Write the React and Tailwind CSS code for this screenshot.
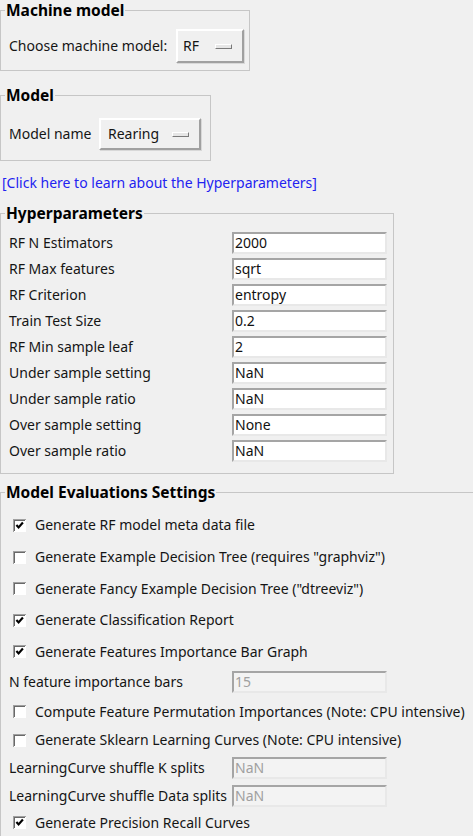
import React from 'react'

const hyper = [
  ['RF N Estimators', '2000'],
  ['RF Max features', 'sqrt'],
  ['RF Criterion', 'entropy'],
  ['Train Test Size', '0.2'],
  ['RF Min sample leaf', '2'],
  ['Under sample setting', 'NaN'],
  ['Under sample ratio', 'NaN'],
  ['Over sample setting', 'None'],
  ['Over sample ratio', 'NaN'],
]

function Entry({ value, disabled }) {
  return (
    <div className={`w-[155px] h-[22px] flex items-center pl-[1px] border-2 border-t-[#a5a5a5] border-l-[#a5a5a5] border-r-[#e8e8e8] border-b-[#e8e8e8] ${disabled ? 'bg-[#f3f3f3] text-[#a0a0a0]' : 'bg-white text-[#111]'}`}>
      {value}
    </div>
  )
}

function OptionMenu({ value, className }) {
  return (
    <div className={`flex items-center justify-between pr-[10px] bg-[#f0f0f0] border-2 border-t-white border-l-white border-r-[#a0a0a0] border-b-[#a0a0a0] shadow-[1px_1px_0_#d8d8d8] ${className}`}>
      <span>{value}</span>
      <div className="w-[17px] h-[5px] bg-[#e6e6e6] border border-t-white border-l-white border-r-[#7a7a7a] border-b-[#7a7a7a]" />
    </div>
  )
}

function Check({ checked, label }) {
  return (
    <div className="flex items-center gap-[9px] pl-[12px]">
      <svg width="13" height="13" viewBox="0 0 13 13" className="shrink-0">
        <rect x="0" y="0" width="13" height="13" fill="#a0a0a0" />
        <rect x="1" y="1" width="12" height="12" fill="#ffffff" />
        <rect x="1" y="1" width="11" height="11" fill="#696969" />
        <rect x="2" y="2" width="10" height="10" fill="#ffffff" />
        {checked && <path d="M3.4 6 L5.6 8.4 L9.9 3.6" stroke="#000" strokeWidth="2.2" fill="none" />}
      </svg>
      <span>{label}</span>
    </div>
  )
}

function Row({ h, children }) {
  return <div className={`flex items-center ${h}`}>{children}</div>
}

export default function App() {
  return (
    <div className="w-[473px] h-[836px] overflow-hidden bg-[#f0f0f0] text-[#151515] text-[14px] leading-[18px] font-['Noto_Sans',sans-serif]">
      <fieldset className="w-[250px] border border-[#c6c6c6] pt-[9px] pb-[7px]">
        <legend className="ml-[4px] px-[1px] font-bold text-[15.5px] leading-[20px] text-black">Machine model</legend>
        <div className="flex items-center h-[34px]">
          <span className="pl-[8px] w-[175px]">Choose machine model:</span>
          <OptionMenu value="RF" className="w-[68px] h-[34px] pl-[5px]" />
        </div>
      </fieldset>

      <fieldset className="mt-[15px] w-[211px] border border-[#c6c6c6] pt-[14px] pb-[10px]">
        <legend className="ml-[4px] px-[1px] font-bold text-[15.5px] leading-[18px] text-black">Model</legend>
        <div className="flex items-center h-[32px]">
          <span className="pl-[8px] w-[98px]">Model name</span>
          <OptionMenu value="Rearing" className="w-[102px] h-[32px] pl-[7px]" />
        </div>
      </fieldset>

      <div className="mt-[13px] pl-[2px] text-[#2323f0] cursor-pointer">[Click here to learn about the Hyperparameters]</div>

      <fieldset className="mt-[12px] w-[394px] border border-[#c6c6c6] pt-[8px] pb-[9px]">
        <legend className="ml-[4px] px-[1px] font-bold text-[15.5px] leading-[18px] text-black">Hyperparameters</legend>
        {hyper.map(([label, value]) => (
          <Row key={label} h="h-[26px]">
            <span className="pl-[8px] w-[231px]">{label}</span>
            <Entry value={value} />
          </Row>
        ))}
      </fieldset>

      <fieldset className="mt-[9px] w-[473px] h-[400px] border border-r-0 border-b-0 border-[#c6c6c6] pt-[8px]">
        <legend className="ml-[4px] px-[1px] font-bold text-[15.5px] leading-[18px] text-black">Model Evaluations Settings</legend>
        <Row h="h-[32px]"><Check checked label="Generate RF model meta data file" /></Row>
        <Row h="h-[32px]"><Check label={'Generate Example Decision Tree (requires "graphviz")'} /></Row>
        <Row h="h-[31px]"><Check label={'Generate Fancy Example Decision Tree ("dtreeviz")'} /></Row>
        <Row h="h-[32px]"><Check checked label="Generate Classification Report" /></Row>
        <Row h="h-[31px]"><Check checked label="Generate Features Importance Bar Graph" /></Row>
        <Row h="h-[30px]">
          <span className="pl-[8px] w-[231px]">N feature importance bars</span>
          <Entry value="15" disabled />
        </Row>
        <Row h="h-[29px]"><Check label="Compute Feature Permutation Importances (Note: CPU intensive)" /></Row>
        <Row h="h-[28px]"><Check label="Generate Sklearn Learning Curves (Note: CPU intensive)" /></Row>
        <Row h="h-[28px]">
          <span className="pl-[8px] w-[231px]">LearningCurve shuffle K splits</span>
          <Entry value="NaN" disabled />
        </Row>
        <Row h="h-[27px]">
          <span className="pl-[8px] w-[231px] whitespace-nowrap">LearningCurve shuffle Data splits</span>
          <Entry value="NaN" disabled />
        </Row>
        <Row h="h-[27px]"><Check checked label="Generate Precision Recall Curves" /></Row>
      </fieldset>
    </div>
  )
}
